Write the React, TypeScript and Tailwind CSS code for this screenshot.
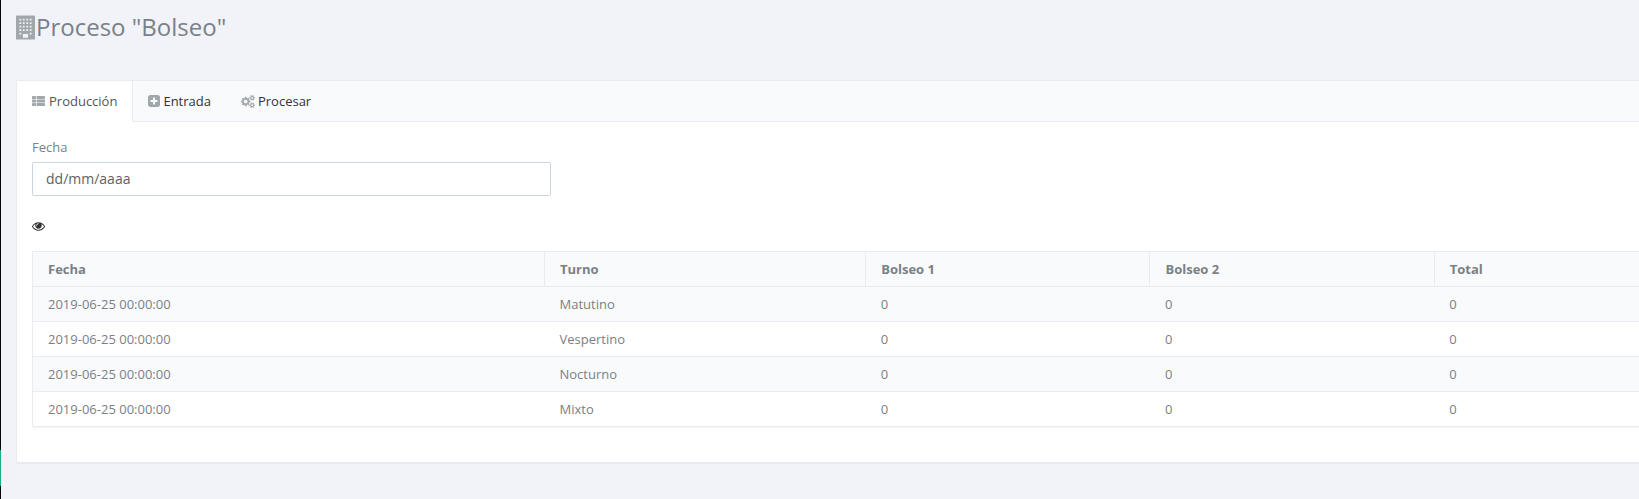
import React from "react";

type IconProps = { className?: string };

const BuildingIcon = ({ className }: IconProps) => (
  <svg viewBox="0 0 1408 1792" fill="currentColor" className={className} aria-hidden="true">
    <path
      fillRule="evenodd"
      d="M64 0h1280q64 0 64 64v1664q0 64-64 64H64q-64 0-64-64V64Q0 0 64 0z
      M256 256v128h128V256zM512 256v128h128V256zM768 256v128h128V256zM1024 256v128h128V256z
      M256 512v128h128V512zM512 512v128h128V512zM768 512v128h128V512zM1024 512v128h128V512z
      M256 768v128h128V768zM512 768v128h128V768zM768 768v128h128V768zM1024 768v128h128V768z
      M256 1024v128h128v-128zM512 1024v128h128v-128zM768 1024v128h128v-128zM1024 1024v128h128v-128z
      M256 1280v128h128v-128zM1024 1280v128h128v-128zM512 1376v288h384v-288z"
    />
  </svg>
);

const ListIcon = ({ className }: IconProps) => (
  <svg viewBox="0 0 13 10" fill="currentColor" className={className} aria-hidden="true">
    <rect x="0" y="0" width="4" height="3" rx="0.4" />
    <rect x="4.6" y="0" width="8.4" height="3" rx="0.4" />
    <rect x="0" y="3.6" width="4" height="2.8" rx="0.4" />
    <rect x="4.6" y="3.6" width="8.4" height="2.8" rx="0.4" />
    <rect x="0" y="7" width="4" height="3" rx="0.4" />
    <rect x="4.6" y="7" width="8.4" height="3" rx="0.4" />
  </svg>
);

const PlusIcon = ({ className }: IconProps) => (
  <svg viewBox="128 128 1536 1536" fill="currentColor" className={className} aria-hidden="true">
    <path d="M1344 960v-128q0-26-19-45t-45-19h-256v-256q0-26-19-45t-45-19h-128q-26 0-45 19t-19 45v256h-256q-26 0-45 19t-19 45v128q0 26 19 45t45 19h256v256q0 26 19 45t45 19h128q26 0 45-19t19-45v-256h256q26 0 45-19t19-45zm320-544v960q0 119-84.5 203.5t-203.5 84.5h-960q-119 0-203.5-84.5t-84.5-203.5v-960q0-119 84.5-203.5t203.5-84.5h960q119 0 203.5 84.5t84.5 203.5z" />
  </svg>
);

const CogsIcon = ({ className }: IconProps) => (
  <svg viewBox="0 0 1920 1792" fill="currentColor" className={className} aria-hidden="true">
    <path d="M896 896q0-106-75-181t-181-75-181 75-75 181 75 181 181 75 181-75 75-181zm768 512q0-52-38-90t-90-38-90 38-38 90q0 53 37.5 90.5t90.5 37.5 90.5-37.5 37.5-90.5zm0-1024q0-52-38-90t-90-38-90 38-38 90q0 53 37.5 90.5t90.5 37.5 90.5-37.5 37.5-90.5zm-384 421v185q0 10-7 19.5t-16 10.5l-155 24q-11 35-32 76 34 48 90 115 7 11 7 20 0 12-7 19-23 30-82.5 89.5t-78.5 59.5q-11 0-21-7l-115-90q-37 19-77 31-11 108-23 155-7 24-30 24h-186q-11 0-20-7.5t-10-17.5l-23-153q-34-10-75-31l-118 89q-7 7-20 7-11 0-21-8-144-133-144-160 0-9 7-19 10-14 41-53t47-61q-23-44-35-82l-152-24q-10-1-17-9.5t-7-19.5v-185q0-10 7-19.5t16-10.5l155-24q11-35 32-76-34-48-90-115-7-11-7-20 0-12 7-20 22-30 82-89t79-59q11 0 21 7l115 90q34-18 77-32 11-108 23-154 7-24 30-24h186q11 0 20 7.5t10 17.5l23 153q34 10 75 31l118-89q8-7 20-7 11 0 21 8 144 133 144 160 0 8-7 19-12 16-42 54t-45 60q23 48 34 82l152 23q10 2 17 10.5t7 19.5zm640 533v140q0 16-149 31-12 27-30 52 51 113 51 138 0 4-4 7-122 71-124 71-8 0-46-47t-52-68q-20 2-30 2t-30-2q-14 21-52 68t-46 47q-2 0-124-71-4-3-4-7 0-25 51-138-18-25-30-52-149-15-149-31v-140q0-16 149-31 13-29 30-52-51-113-51-138 0-4 4-7 4-2 35-20t59-34 30-16q8 0 46 46.5t52 67.5q20-2 30-2t30 2q51-71 92-112l6-2q4 0 124 70 4 3 4 7 0 25-51 138 17 23 30 52 149 15 149 31zm0-1024v140q0 16-149 31-12 27-30 52 51 113 51 138 0 4-4 7-122 71-124 71-8 0-46-47t-52-68q-20 2-30 2t-30-2q-14 21-52 68t-46 47q-2 0-124-71-4-3-4-7 0-25 51-138-18-25-30-52-149-15-149-31v-140q0-16 149-31 13-29 30-52-51-113-51-138 0-4 4-7 4-2 35-20t59-34 30-16q8 0 46 46.5t52 67.5q20-2 30-2t30 2q51-71 92-112l6-2q4 0 124 70 4 3 4 7 0 25-51 138 17 23 30 52 149 15 149 31z" />
  </svg>
);

const EyeIcon = ({ className }: IconProps) => (
  <svg viewBox="0 384 1792 1152" fill="currentColor" className={className} aria-hidden="true">
    <path d="M1664 960q-152-236-381-353 61 104 61 225 0 185-131.5 316.5t-316.5 131.5-316.5-131.5-131.5-316.5q0-121 61-225-229 117-381 353 133 205 333.5 326.5t434.5 121.5 434.5-121.5 333.5-326.5zm-720-384q0-20-14-34t-34-14q-125 0-214.5 89.5t-89.5 214.5q0 20 14 34t34 14 34-14 14-34q0-86 61-147t147-61q20 0 34-14t14-34zm848 384q0 34-20 69-140 230-376.5 368.5t-499.5 138.5-499.5-139-376.5-368q-20-35-20-69t20-69q140-229 376.5-368t499.5-139 499.5 139 376.5 368q20 35 20 69z" />
  </svg>
);

const columns = [
  { label: "Fecha", width: "w-[31.85%]" },
  { label: "Turno", width: "w-[20%]" },
  { label: "Bolseo 1", width: "w-[17.7%]" },
  { label: "Bolseo 2", width: "w-[17.7%]" },
  { label: "Total", width: "" },
];

const rows = ["Matutino", "Vespertino", "Nocturno", "Mixto"].map((shift) => [
  "2019-06-25 00:00:00",
  shift,
  "0",
  "0",
  "0",
]);

export default function App() {
  return (
    <div className="flex min-h-screen bg-[#f2f3f8] font-['Open_Sans',sans-serif] text-[13px] leading-5 text-[#7b8084]">
      <aside className="flex w-px shrink-0 flex-col bg-[#060410]">
        <div className="grow" />
        <div className="h-9 bg-[#1aae88]" />
        <div className="h-[13px]" />
      </aside>
      <main className="min-w-0 grow pl-[15px]">
        <h1 className="flex h-20 items-start pt-[11px] text-2xl leading-8 text-[#788188]">
          <BuildingIcon className="mt-1 mr-px h-[25px] w-[19px] text-[#a1a8ac]" />
          Proceso "Bolseo"
        </h1>

        <section className="rounded-l-xs border border-r-0 border-[#e8ebef] bg-white shadow-[0_1px_1px_rgba(0,0,0,0.05)]">
          <div role="tablist" className="flex bg-[#f9fafc]">
            <button
              role="tab"
              aria-selected="true"
              className="box-content flex h-10 items-center gap-1 border-r border-b border-r-[#e8ebef] border-b-white bg-white px-[15px] text-[#555]"
            >
              <ListIcon className="h-[10px] w-[13px] text-[#a1a8ac]" />
              Producción
            </button>
            <div className="flex grow border-b border-[#e8ebef] text-[#333]">
              <button role="tab" aria-selected="false" className="flex items-center gap-[3px] px-[15px]">
                <PlusIcon className="size-3 text-[#a1a8ac]" />
                Entrada
              </button>
              <button role="tab" aria-selected="false" className="flex items-center gap-[3px] px-[15px]">
                <CogsIcon className="h-[13px] w-[14px] text-[#a1a8ac]" />
                Procesar
              </button>
            </div>
          </div>

          <div className="pt-[15px] pb-[35px] pl-[15px]">
            <label htmlFor="fecha" className="mb-[5px] block">
              Fecha
            </label>
            <input
              id="fecha"
              type="text"
              placeholder="dd/mm/aaaa"
              className="block h-[34px] w-[32.3%] rounded-xs border border-[#cbd5dd] bg-white px-[13px] pb-0.5 text-sm text-[#555] placeholder:text-[#616161]"
            />
            <button aria-label="Ver" className="mt-[23px] mb-[17px] flex h-[15px] items-center text-[#333]">
              <EyeIcon className="h-[9px] w-[13px]" />
            </button>

            <div className="rounded-l-xs border border-r-0 border-[#e8ebef] shadow-[0_1px_1px_rgba(0,0,0,0.05)]">
              <table className="w-full table-fixed border-collapse text-left">
                <thead>
                  <tr className="h-[34px] bg-[#f9fafc]">
                    {columns.map((c) => (
                      <th
                        key={c.label}
                        className={`${c.width} border-r border-b border-[#e8ebef] px-[15px] font-bold last:border-r-0`}
                      >
                        {c.label}
                      </th>
                    ))}
                  </tr>
                </thead>
                <tbody>
                  {rows.map((row) => (
                    <tr
                      key={row[1]}
                      className="h-[35px] border-b border-[#e8ebef] odd:bg-[#f9fafc] last:border-b-0"
                    >
                      {row.map((cell, i) => (
                        <td key={i} className="px-[15px]">
                          {cell}
                        </td>
                      ))}
                    </tr>
                  ))}
                </tbody>
              </table>
            </div>
          </div>
        </section>
      </main>
    </div>
  );
}
